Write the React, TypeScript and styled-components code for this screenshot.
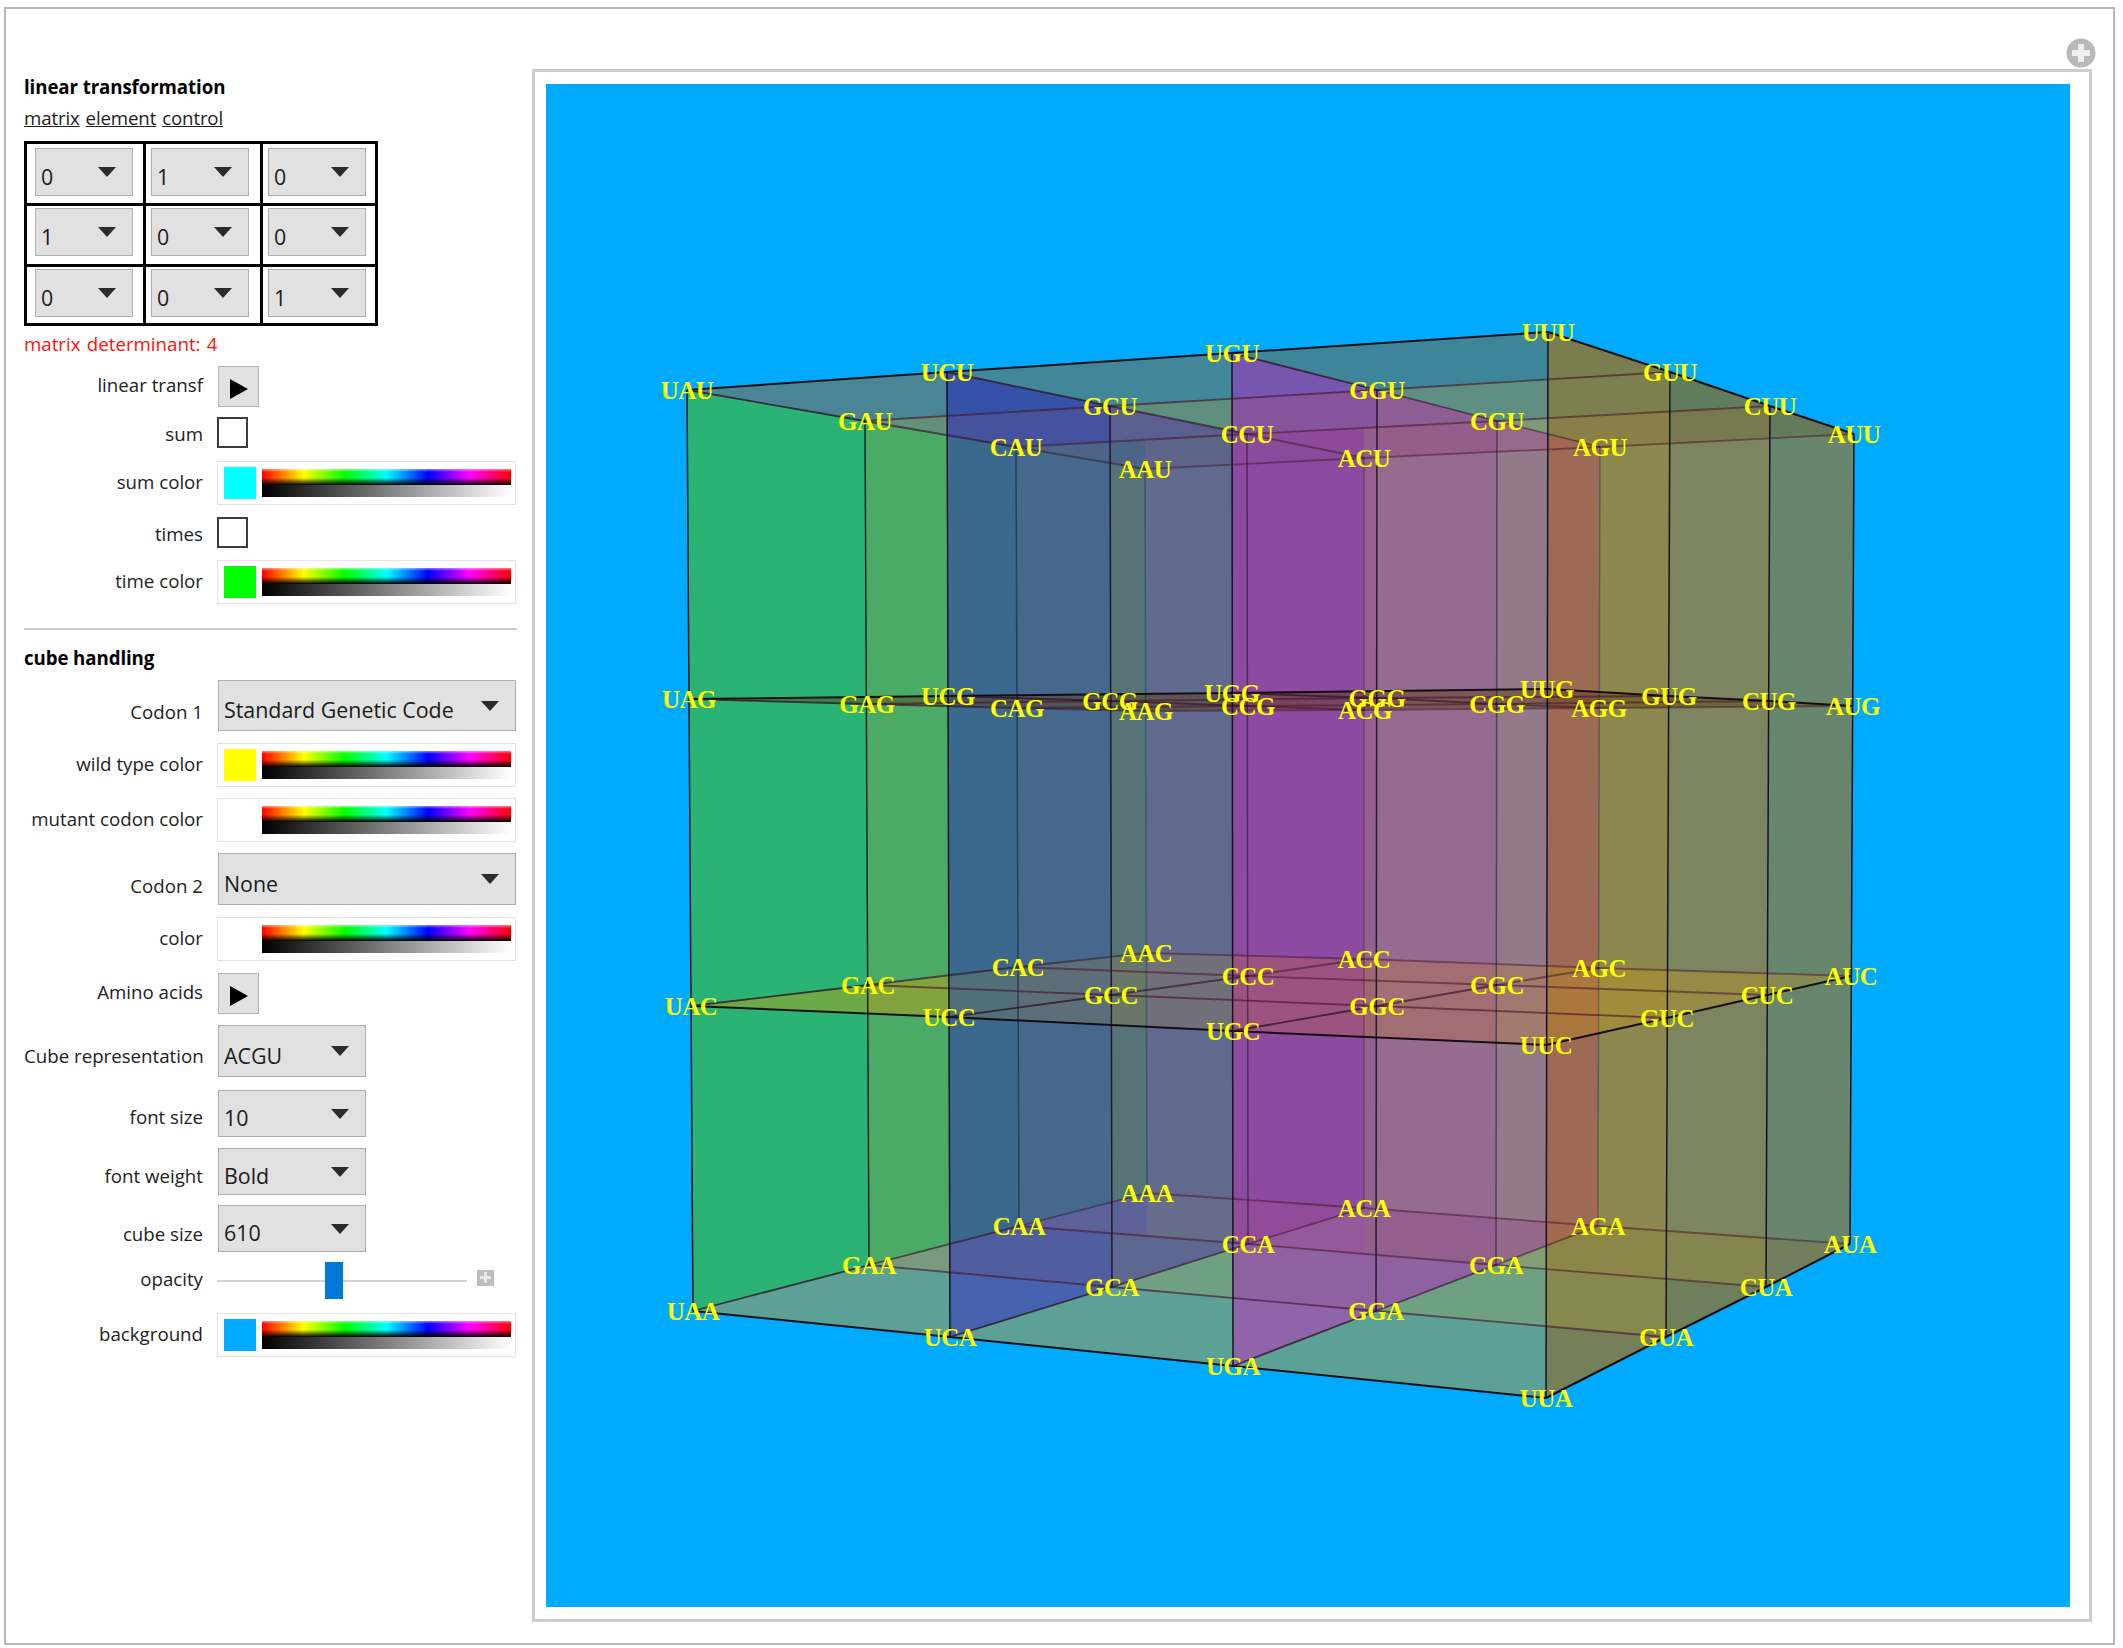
import styled, { createGlobalStyle } from "styled-components";

type Pt = [number, number];

const V: Record<string, Pt> = {
  UAU: [687, 390], UCU: [947, 372], UGU: [1232, 353], UUU: [1548, 332],
  GAU: [865, 421], GCU: [1110, 406], GGU: [1377, 390], GUU: [1670, 372],
  CAU: [1016, 447], CCU: [1247, 434], CGU: [1497, 421], CUU: [1770, 406],
  AAU: [1145, 469], ACU: [1364, 458], AGU: [1600, 447], AUU: [1854, 434],
  UAG: [689, 699], UCG: [948, 696], UGG: [1232, 693], UUG: [1547, 689],
  GAG: [867, 704], GCG: [1110, 701], GGG: [1377, 698], GUG: [1669, 696],
  CAG: [1017, 708], CCG: [1248, 706], CGG: [1497, 704], CUG: [1769, 701],
  AAG: [1146, 711], ACG: [1365, 710], AGG: [1599, 708], AUG: [1853, 706],
  UAC: [691, 1006], UCC: [949, 1017], UGC: [1233, 1031], UUC: [1546, 1045],
  GAC: [868, 985], GCC: [1111, 995], GGC: [1377, 1006], GUC: [1667, 1018],
  CAC: [1018, 967], CCC: [1248, 976], CGC: [1497, 985], CUC: [1767, 995],
  AAC: [1146, 953], ACC: [1364, 959], AGC: [1599, 968], AUC: [1851, 976],
  UAA: [693, 1311], UCA: [950, 1337], UGA: [1233, 1366], UUA: [1546, 1398],
  GAA: [869, 1265], GCA: [1112, 1287], GGA: [1376, 1311], GUA: [1666, 1337],
  CAA: [1019, 1226], CCA: [1248, 1244], CGA: [1496, 1265], CUA: [1766, 1287],
  AAA: [1147, 1193], ACA: [1364, 1208], AGA: [1598, 1226], AUA: [1850, 1244],
};

const FIRST = ["U", "G", "C", "A"];
const SECOND = ["A", "C", "G", "U"];
const THIRD = ["U", "G", "C", "A"];

// signed distance from the vertical edge of a column, which tilts a little
const side = (p: Pt, col: string) => {
  const a = V[col + "U"];
  const b = V[col + "A"];
  return p[0] - (a[0] + ((p[1] - a[1]) * (b[0] - a[0])) / (b[1] - a[1]));
};

const clip = (poly: Pt[], col: string, keepRight: boolean) => {
  const out: Pt[] = [];
  poly.forEach((p, i) => {
    const q = poly[(i + 1) % poly.length];
    const dp = keepRight ? side(p, col) : -side(p, col);
    const dq = keepRight ? side(q, col) : -side(q, col);
    if (dp >= 0) out.push(p);
    if (dp >= 0 !== dq >= 0) {
      const t = dp / (dp - dq);
      out.push([p[0] + (q[0] - p[0]) * t, p[1] + (q[1] - p[1]) * t]);
    }
  });
  return out;
};

type Piece = [string, string | null];

// walks left to right, each piece ends at the named column
const slice = (poly: Pt[], pieces: Piece[]) => {
  let start: string | null = null;
  return pieces.map(([color, end]) => {
    let part = poly;
    if (start) part = clip(part, start, true);
    if (end) part = clip(part, end, false);
    start = end;
    return { color, points: part.map((p) => p.join(",")).join(" ") };
  });
};

const quad = (f: number, s: number, t: string) =>
  [
    V[FIRST[f] + SECOND[s] + t],
    V[FIRST[f] + SECOND[s + 1] + t],
    V[FIRST[f + 1] + SECOND[s + 1] + t],
    V[FIRST[f + 1] + SECOND[s] + t],
  ] as Pt[];

const HULL: Pt[] = ["UAU", "UUU", "AUU", "AUA", "UUA", "UAA"].map((k) => V[k]);

const BANDS: Piece[] = [
  ["#2ab375", "GA"],
  ["#4bab66", "UC"],
  ["#3a698d", "CA"],
  ["#46688d", "GC"],
  ["#56737a", "AA"],
  ["#60698e", "UG"],
  ["#8c4aa0", "AC"],
  ["#936090", "GG"],
  ["#956c90", "CG"],
  ["#937a8a", "UU"],
  ["#9c6a55", "AG"],
  ["#8c8850", "GU"],
  ["#7c855f", "CU"],
  ["#68866e", null],
];

const TOP_CELLS: Piece[][][] = [
  [
    [["#4a8596", "UC"], ["#3652a8", null]],
    [["#428699", "UG"], ["#7656ae", null]],
    [["#3f8599", "UU"], ["#7a7d50", null]],
  ],
  [
    [["#638f7b", "UC"], ["#4552a0", "GC"], ["#5a5f8f", "UG"], ["#84509a", null]],
    [["#5e8f7c", "UG"], ["#86549a", "GG"], ["#8d5e93", null]],
    [["#5f8f83", "UU"], ["#7c7f50", "GU"], ["#627c5e", null]],
  ],
  [
    [["#4c6487", "AA"], ["#5d6489", "UG"], ["#8a4b9c", null]],
    [["#8d4a9c", "AC"], ["#955e8a", "CG"], ["#97698a", "UU"], ["#a26650", null]],
    [["#7c9a78", "UU"], ["#8a7f48", "GU"], ["#78794f", "CU"], ["#647b5b", null]],
  ],
];

const BOTTOM_CELLS: Piece[][][] = [
  [
    [["#5ca096", "UC"], ["#4662ae", null]],
    [["#5ca096", "UG"], ["#8f64a8", null]],
    [["#5ca096", "UU"], ["#757f59", null]],
  ],
  [
    [["#7a9a7e", "UC"], ["#505ea0", "GC"], ["#5d6890", "UG"], ["#8e5f9e", null]],
    [["#70a082", "UG"], ["#8e62a0", null]],
    [["#6fa082", "UU"], ["#87884e", "GU"], ["#6f7f5b", null]],
  ],
  [
    [["#5c6197", "AA"], ["#676c8a", "UG"], ["#914b98", null]],
    [["#95589a", "AC"], ["#935f8e", "CG"], ["#96688a", "UU"], ["#a2694f", null]],
    [["#80a073", "UU"], ["#8c8748", "GU"], ["#84854f", "CU"], ["#717f5c", null]],
  ],
];

const MIDDLE_TINT: Piece[] = [
  ["rgba(222, 152, 0, 0.38)", "UC"],
  ["rgba(222, 152, 0, 0.14)", "UG"],
  ["rgba(222, 120, 0, 0.2)", "UU"],
  ["rgba(222, 160, 0, 0.26)", null],
];

const ROW_ALPHA = [0.95, 0.62, 0.55, 0.5];
const DROP_ALPHA = [0.95, 0.85, 0.5, 0.3];

const GlobalStyle = createGlobalStyle`
  html, body {
    margin: 0;
    padding: 0;
    background: #ffffff;
    color: #111111;
    font-family: "Open Sans", "Noto Sans", sans-serif;
  }
`;

const Frame = styled.div`
  position: relative;
  box-sizing: border-box;
  display: flex;
  align-items: flex-start;
  width: 2111px;
  height: 1638px;
  margin: 7px 0 0 4px;
  border: 2px solid #b7b7b7;
`;

const Sidebar = styled.div`
  display: flex;
  flex-direction: column;
  width: 493px;
  margin: 66px 0 0 18px;
`;

const Heading = styled.div<{ $top?: number }>`
  height: 24px;
  margin-top: ${(p) => p.$top ?? 0}px;
  font-size: 18.7px;
  font-weight: 700;
  line-height: 24px;
  letter-spacing: -0.1px;
  color: #000000;
`;

const LinkLine = styled.div`
  display: flex;
  gap: 6px;
  height: 24px;
  margin-top: 7px;
  font-size: 18.7px;
  line-height: 24px;
  color: #222222;
  span {
    text-decoration: underline;
    letter-spacing: -0.15px;
  }
`;

const Matrix = styled.div`
  display: grid;
  grid-template-columns: 116px 114px 112px;
  grid-template-rows: 59px 58px 56px;
  gap: 3px;
  width: 354px;
  box-sizing: border-box;
  padding: 3px;
  margin-top: 11px;
  background: #000000;
`;

const MatrixCell = styled.div<{ $left: number; $top: number }>`
  display: flex;
  align-items: flex-start;
  padding: ${(p) => p.$top}px 0 0 ${(p) => p.$left}px;
  background: #ffffff;
`;

const Select = styled.div<{ $width: number; $height: number; $inset?: number }>`
  box-sizing: border-box;
  display: flex;
  align-items: center;
  justify-content: space-between;
  width: ${(p) => p.$width}px;
  height: ${(p) => p.$height}px;
  margin-left: ${(p) => p.$inset ?? 0}px;
  padding: 0 16px 0 5px;
  background: #e1e1e1;
  border: 1.5px solid #adadad;
  font-size: 21.4px;
  color: #1c1c1c;
  span {
    padding-top: 8px;
    white-space: nowrap;
  }
`;

const Caret = styled.i`
  flex: none;
  width: 0;
  height: 0;
  border-left: 9px solid transparent;
  border-right: 9px solid transparent;
  border-top: 10px solid #2b2b2b;
`;

const Determinant = styled.div`
  height: 24px;
  margin-top: 6px;
  font-size: 18.7px;
  line-height: 24px;
  color: #ff1010;
  word-spacing: 1.5px;
`;

const Row = styled.div<{ $top: number; $height: number }>`
  display: grid;
  grid-template-columns: 179px 1fr;
  column-gap: 14px;
  align-items: center;
  height: ${(p) => p.$height}px;
  margin-top: ${(p) => p.$top}px;
`;

const Label = styled.div<{ $drop?: number }>`
  padding-top: ${(p) => p.$drop ?? 0}px;
  padding-bottom: 3px;
  text-align: right;
  font-size: 18.7px;
  line-height: 24px;
  white-space: nowrap;
  color: #222222;
`;

const PlayButton = styled.button`
  display: flex;
  align-items: center;
  justify-content: center;
  box-sizing: border-box;
  width: 41px;
  height: 41px;
  margin: 0 0 0 1px;
  padding: 4px 0 0 0;
  background: #e1e1e1;
  border: 1.5px solid #b5b5b5;
`;

const CheckBox = styled.div`
  box-sizing: border-box;
  width: 31px;
  height: 31px;
  background: #ffffff;
  border: 2.5px solid #3c3c3c;
`;

const ColorBox = styled.div`
  box-sizing: border-box;
  display: flex;
  align-items: center;
  gap: 6px;
  width: 299px;
  height: 44px;
  padding: 0 4px 0 6px;
  background: #ffffff;
  border: 1.5px solid #e2e2e2;
`;

const Swatch = styled.div<{ $color: string }>`
  flex: none;
  width: 32px;
  height: 32px;
  background: ${(p) => p.$color};
`;

const Spectrum = styled.div`
  flex: 1;
  display: flex;
  flex-direction: column;
  height: 28px;
`;

const Rainbow = styled.div`
  height: 16px;
  background:
    linear-gradient(180deg, rgba(255, 255, 255, 0.5) 0, rgba(255, 255, 255, 0) 18%, rgba(0, 0, 0, 0) 55%, #000000 100%),
    linear-gradient(90deg, #ff0000, #ffff00, #00ff00, #00ffff, #0000ff, #ff00ff, #ff0000);
`;

const GrayRamp = styled.div`
  height: 12px;
  background: linear-gradient(90deg, #000000, #ffffff);
`;

const SliderRow = styled.div`
  display: flex;
  align-items: center;
  gap: 10px;
`;

const Track = styled.div`
  position: relative;
  width: 250px;
  height: 2px;
  background: #d2d2d2;
`;

const Thumb = styled.div`
  position: absolute;
  left: 108px;
  top: -18px;
  width: 18px;
  height: 37px;
  background: #0078d7;
`;

const MiniPlus = styled.div`
  display: flex;
  align-items: center;
  justify-content: center;
  width: 17px;
  height: 16px;
  margin-top: -6px;
  background: #bdbdbd;
  color: #ffffff;
`;

const Divider = styled.div`
  height: 2px;
  margin-top: 24px;
  background: #cccccc;
`;

const PlotFrame = styled.div`
  box-sizing: border-box;
  flex: none;
  width: 1560px;
  height: 1553px;
  margin: 60px 0 0 15px;
  padding: 12px 19px 12px 11px;
  background: #ffffff;
  border: 3px solid #cdcdcd;
`;

const Plot = styled.svg`
  display: block;
  width: 1524px;
  height: 1523px;
  background: #00aaff;
`;

const Codon = styled.text`
  font-family: "Liberation Serif", "Times New Roman", serif;
  font-size: 25px;
  font-weight: 700;
  letter-spacing: -0.5px;
  fill: #ffff00;
  text-anchor: middle;
  dominant-baseline: central;
`;

const ExpandButton = styled.svg`
  position: absolute;
  right: 17px;
  top: 29px;
  width: 30px;
  height: 30px;
`;

const MATRIX = [
  ["0", "1", "0"],
  ["1", "0", "0"],
  ["0", "0", "1"],
];

const MATRIX_TOPS = [4, 2, 2];
const MATRIX_LEFTS = [8, 5, 5];

const PlayIcon = () => (
  <svg width="18" height="20" viewBox="0 0 18 20">
    <polygon points="0,0 18,10 0,20" fill="#000000" />
  </svg>
);

const ColorPicker = ({ color }: { color: string }) => (
  <ColorBox>
    <Swatch $color={color} />
    <Spectrum>
      <Rainbow />
      <GrayRamp />
    </Spectrum>
  </ColorBox>
);

const Cube = () => {
  const polys: { color: string; points: string }[] = [...slice(HULL, BANDS)];

  [0, 1, 2].forEach((f) =>
    [0, 1, 2].forEach((s) => {
      polys.push(...slice(quad(f, s, "U"), TOP_CELLS[f][s]));
      polys.push(...slice(quad(f, s, "A"), BOTTOM_CELLS[f][s]));
    })
  );

  const plane = (t: string) => ["UA", "UU", "AU", "AA"].map((k) => V[k + t]);
  polys.push(...slice(plane("C"), MIDDLE_TINT));

  const lines: { a: Pt; b: Pt; color: string; width: number }[] = [];

  THIRD.forEach((t) => {
    FIRST.forEach((f, i) => {
      SECOND.slice(0, 3).forEach((s, j) => {
        lines.push({
          a: V[f + s + t],
          b: V[f + SECOND[j + 1] + t],
          color: i === 0 ? "rgba(15, 10, 15, 0.95)" : `rgba(70, 20, 40, ${ROW_ALPHA[i]})`,
          width: i === 0 ? 2 : 1.8,
        });
      });
    });
    SECOND.forEach((s, j) => {
      FIRST.slice(0, 3).forEach((f, i) => {
        lines.push({
          a: V[f + s + t],
          b: V[FIRST[i + 1] + s + t],
          color: j === 3 ? "rgba(15, 10, 15, 0.95)" : `rgba(50, 20, 40, ${0.8 - i * 0.15})`,
          width: j === 3 ? 2 : 1.8,
        });
      });
    });
  });

  FIRST.forEach((f, i) => {
    SECOND.forEach((s) => {
      lines.push({
        a: V[f + s + "U"],
        b: V[f + s + "A"],
        color: `rgba(20, 12, 30, ${s === "U" ? 0.95 : DROP_ALPHA[i]})`,
        width: 1.5,
      });
    });
  });

  return (
    <Plot viewBox="546 84 1524 1523">
      {polys.map((p, i) => (
        <polygon key={`cell_${i}`} points={p.points} fill={p.color} />
      ))}
      <polygon
        points={plane("G").map((p) => p.join(",")).join(" ")}
        fill="rgba(90, 60, 20, 0.45)"
      />
      {lines.map((l, i) => (
        <line
          key={`line_${i}`}
          x1={l.a[0]}
          y1={l.a[1]}
          x2={l.b[0]}
          y2={l.b[1]}
          stroke={l.color}
          strokeWidth={l.width}
        />
      ))}
      {Object.keys(V).map((key) => (
        <Codon key={key} x={V[key][0]} y={V[key][1]}>
          {key}
        </Codon>
      ))}
    </Plot>
  );
};

const App = () => {
  return (
    <>
      <GlobalStyle />
      <Frame>
        <Sidebar>
          <Heading>linear transformation</Heading>
          <LinkLine>
            <span>matrix</span>
            <span>element</span>
            <span>control</span>
          </LinkLine>
          <Matrix>
            {MATRIX.map((values, r) =>
              values.map((value, c) => (
                <MatrixCell key={`cell_${r}_${c}`} $left={MATRIX_LEFTS[c]} $top={MATRIX_TOPS[r]}>
                  <Select $width={98} $height={48}>
                    <span>{value}</span>
                    <Caret />
                  </Select>
                </MatrixCell>
              ))
            )}
          </Matrix>
          <Determinant>matrix determinant: 4</Determinant>

          <Row $top={10} $height={41}>
            <Label>linear transf</Label>
            <PlayButton type="button" aria-label="play">
              <PlayIcon />
            </PlayButton>
          </Row>
          <Row $top={9} $height={31}>
            <Label $drop={6}>sum</Label>
            <CheckBox />
          </Row>
          <Row $top={14} $height={44}>
            <Label>sum color</Label>
            <ColorPicker color="#00ffff" />
          </Row>
          <Row $top={11} $height={31}>
            <Label $drop={6}>times</Label>
            <CheckBox />
          </Row>
          <Row $top={13} $height={44}>
            <Label>time color</Label>
            <ColorPicker color="#00ff00" />
          </Row>

          <Divider />
          <Heading $top={16}>cube handling</Heading>

          <Row $top={10} $height={51}>
            <Label $drop={16}>Codon 1</Label>
            <Select $width={298} $height={51} $inset={1}>
              <span>Standard Genetic Code</span>
              <Caret />
            </Select>
          </Row>
          <Row $top={12} $height={44}>
            <Label>wild type color</Label>
            <ColorPicker color="#ffff00" />
          </Row>
          <Row $top={11} $height={44}>
            <Label>mutant codon color</Label>
            <ColorPicker color="#ffffff" />
          </Row>
          <Row $top={11} $height={52}>
            <Label $drop={16}>Codon 2</Label>
            <Select $width={298} $height={52} $inset={1}>
              <span>None</span>
              <Caret />
            </Select>
          </Row>
          <Row $top={12} $height={44}>
            <Label>color</Label>
            <ColorPicker color="#ffffff" />
          </Row>
          <Row $top={12} $height={41}>
            <Label>Amino acids</Label>
            <PlayButton type="button" aria-label="play">
              <PlayIcon />
            </PlayButton>
          </Row>
          <Row $top={11} $height={52}>
            <Label $drop={13}>Cube representation</Label>
            <Select $width={148} $height={52} $inset={1}>
              <span>ACGU</span>
              <Caret />
            </Select>
          </Row>
          <Row $top={13} $height={47}>
            <Label $drop={10}>font size</Label>
            <Select $width={148} $height={47} $inset={1}>
              <span>10</span>
              <Caret />
            </Select>
          </Row>
          <Row $top={11} $height={47}>
            <Label $drop={11}>font weight</Label>
            <Select $width={148} $height={47} $inset={1}>
              <span>Bold</span>
              <Caret />
            </Select>
          </Row>
          <Row $top={10} $height={47}>
            <Label $drop={13}>cube size</Label>
            <Select $width={148} $height={47} $inset={1}>
              <span>610</span>
              <Caret />
            </Select>
          </Row>
          <Row $top={10} $height={37}>
            <Label>opacity</Label>
            <SliderRow>
              <Track>
                <Thumb />
              </Track>
              <MiniPlus>
                <svg width="11" height="11" viewBox="0 0 11 11">
                  <path d="M4 0h3v4h4v3H7v4H4V7H0V4h4z" fill="#e9e9e9" />
                </svg>
              </MiniPlus>
            </SliderRow>
          </Row>
          <Row $top={14} $height={44}>
            <Label>background</Label>
            <ColorPicker color="#00aaff" />
          </Row>
        </Sidebar>

        <PlotFrame>
          <Cube />
        </PlotFrame>

        <ExpandButton viewBox="0 0 30 30">
          <circle cx="15" cy="15" r="14.5" fill="#b9b9b9" />
          <path d="M12 6h6v6h6v6h-6v6h-6v-6H6v-6h6z" fill="#eeeeee" />
        </ExpandButton>
      </Frame>
    </>
  );
};

export default App;
